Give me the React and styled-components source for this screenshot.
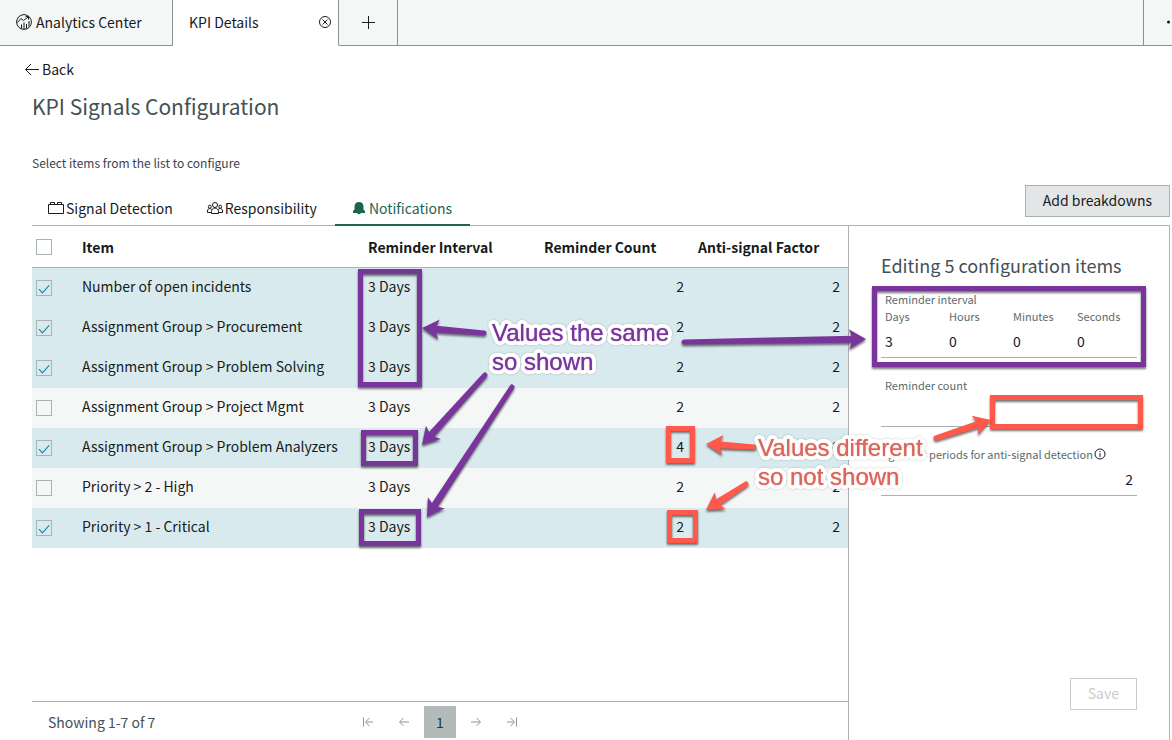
import { useState } from 'react';
import styled, { createGlobalStyle } from 'styled-components';

const GlobalStyle = createGlobalStyle`
  *, *::before, *::after {
    box-sizing: border-box;
  }
  body {
    margin: 0;
    background: #fff;
    color: #161b1c;
    font-family: 'Noto Sans CJK SC', 'Noto Sans', sans-serif;
    font-size: 14px;
    line-height: 24px;
  }
  button, input {
    font: inherit;
    color: inherit;
    margin: 0;
    padding: 0;
  }
  svg {
    display: block;
    flex: none;
  }
`;

const line = '#a9b3b3';
const purple = '#7a359c';
const red = '#ff594b';

const Page = styled.div`
  position: relative;
  display: flex;
  flex-direction: column;
  height: 100vh;
  overflow: hidden;
`;

/* workspace tabs */

const TabBar = styled.nav`
  display: flex;
  flex: none;
  height: 46px;
  background: #f5f7f7;
`;

const WorkTab = styled.button`
  display: flex;
  align-items: center;
  gap: 4px;
  width: ${(p) => p.$width}px;
  padding: 0 ${(p) => (p.$active ? 5 : 16)}px 2px 16px;
  border: 0;
  border-right: 1px solid #879494;
  border-bottom: 1px solid ${(p) => (p.$active ? '#fff' : '#879494')};
  background: ${(p) => (p.$active ? '#fff' : 'transparent')};
  white-space: nowrap;
`;

const TabName = styled.span`
  flex: 1;
  text-align: left;
`;

const AddTab = styled(WorkTab)`
  justify-content: center;
  padding: 0 0 2px;
`;

const TabFiller = styled.div`
  flex: 1;
  border-right: 1px solid #879494;
  border-bottom: 1px solid #879494;
`;

const MoreTab = styled.button`
  width: 28px;
  padding: 0 0 2px 22px;
  overflow: hidden;
  border: 0;
  border-bottom: 1px solid #879494;
  background: transparent;
`;

/* page head */

const Main = styled.main`
  display: flex;
  flex: 1;
  flex-direction: column;
  min-height: 0;
  padding: 11px 2px 0 32px;
`;

const BackLink = styled.a`
  display: flex;
  align-items: center;
  align-self: flex-start;
  gap: 2px;
  margin-left: -8px;
  color: inherit;
  text-decoration: none;
`;

const Title = styled.h1`
  margin: 9px 0 0;
  color: #435154;
  font-size: 21px;
  font-weight: 400;
  line-height: 32px;
`;

const Hint = styled.p`
  margin: 31px 0 12px;
  color: #3b4250;
  font-size: 12px;
  line-height: 20px;
`;

const SectionBar = styled.div`
  display: flex;
  justify-content: space-between;
  align-items: flex-start;
  height: 40px;
`;

const Sections = styled.div`
  display: flex;
  padding-top: 8px;
`;

/* positioned so that the active underline covers the line below it */
const Section = styled.button`
  position: relative;
  display: flex;
  align-items: center;
  gap: 2px;
  height: 33px;
  padding: 0 18px 2px 16px;
  border: 0;
  border-bottom: 2px solid ${(p) => (p.$active ? '#1b6552' : 'transparent')};
  background: none;
  color: ${(p) => (p.$active ? '#1b6552' : 'inherit')};
`;

const Button = styled.button`
  height: 32px;
  padding: 0 17px 2px;
  border: 1px solid ${line};
  background: #e4e5e7;

  &:disabled {
    border-color: #cbcbcb;
    background: #fff;
    color: #cbcbcb;
  }
`;

/* list */

const Body = styled.div`
  display: flex;
  flex: 1;
  min-height: 0;
  border-top: 1px solid ${line};
`;

const ListPane = styled.section`
  display: flex;
  flex: 1;
  flex-direction: column;
  min-width: 0;
`;

const Table = styled.table`
  width: 100%;
  border-spacing: 0;
  table-layout: fixed;
`;

const Col = styled.col`
  width: ${(p) => p.$width}px;
`;

const Th = styled.th`
  height: 42px;
  padding: 0 0 0 ${(p) => p.$left ?? 16}px;
  border-bottom: 1px solid ${line};
  font-weight: 700;
  text-align: left;
  white-space: nowrap;
`;

const Row = styled.tr`
  background: ${(p) => (p.$checked ? '#d9eaee' : '#f5f7f6')};
`;

const Td = styled.td`
  height: 40px;
  padding: 0 8px 4px 16px;
  text-align: ${(p) => (p.$numeric ? 'right' : 'left')};
  white-space: nowrap;
`;

const CheckCell = styled(Td)`
  padding: 0 0 0 4px;
`;

const Checkbox = styled.input`
  display: block;
  width: 16px;
  height: 16px;
  appearance: none;
  border: 1px solid ${line};
  background: transparent center / 14px 14px no-repeat;

  &:checked {
    background-image: url("data:image/svg+xml,%3Csvg xmlns='http://www.w3.org/2000/svg' viewBox='0 0 14 14'%3E%3Cpath d='M2 8.200l3.400 3.600L12.200 4.300' fill='none' stroke='%231f8ba0' stroke-width='1.2'/%3E%3C/svg%3E");
  }
`;

const Footer = styled.footer`
  display: grid;
  grid-template-columns: 320px 1fr;
  align-items: center;
  margin-top: auto;
  height: 39px;
  padding-top: 2px;
  border-top: 1px solid ${line};
  color: #435154;
`;

const Showing = styled.span`
  padding-left: 16px;
`;

const Pager = styled.div`
  display: flex;
  gap: 4px;
`;

const PageButton = styled.button`
  display: flex;
  align-items: center;
  justify-content: center;
  width: 32px;
  height: 32px;
  border: 0;
  background: ${(p) => (p.$current ? '#b2bbb9' : 'none')};
  color: ${(p) => (p.$current ? '#143d35' : '#8d9494')};
`;

/* edit panel */

const Panel = styled.form`
  display: flex;
  flex: none;
  flex-direction: column;
  width: 322px;
  padding: 23px 32px 30px;
  border: solid ${line};
  border-width: 0 1px;
`;

const PanelTitle = styled.h2`
  margin: 0;
  color: #435154;
  font-size: 18px;
  font-weight: 400;
  line-height: 32px;
  white-space: nowrap;
`;

const Fields = styled.fieldset`
  display: grid;
  grid-template-columns: repeat(4, 1fr);
  min-width: 0;
  margin: 0;
  padding: 0;
  border: 0;
  border-bottom: 1px solid ${line};
`;

const Label = styled.label`
  display: flex;
  align-items: center;
  padding-left: 4px;
  color: #5b6b6d;
  font-size: 11px;
  line-height: 18px;
  white-space: nowrap;
`;

const Legend = styled(Label).attrs({ as: 'legend' })`
  padding: 10px 0 0 4px;
  line-height: 16px;
`;

const UnitInput = styled.input`
  width: 100%;
  height: 32px;
  padding: 0 4px;
  border: 0;
  background: none;
`;

const Field = styled.div`
  padding-top: 18px;
  border-bottom: 1px solid ${line};
`;

const CountInput = styled(UnitInput)`
  text-align: right;
`;

const InfoIcon = styled.svg`
  color: #161b1c;
`;

const Actions = styled.div`
  display: flex;
  justify-content: flex-end;
  margin-top: auto;
`;

/* callouts drawn over the page */

const Callouts = styled.div`
  position: absolute;
  inset: 0;
  overflow: hidden;
  pointer-events: none;
`;

const Ink = styled.svg`
  position: absolute;
  inset: 0;
  width: 100%;
  height: 100%;

  > g {
    filter: drop-shadow(0 2px 1px rgba(0, 0, 0, 0.55));
  }
`;

// solid white ring round the letters
const halo = [2, 4]
  .flatMap((radius) =>
    Array.from({ length: 24 }, (_, i) => {
      const angle = (i / 24) * 2 * Math.PI;
      return `${(Math.cos(angle) * radius).toFixed(2)}px ${(Math.sin(angle) * radius).toFixed(2)}px #fff`;
    }),
  )
  .join(', ');

const Note = styled.p`
  position: absolute;
  top: ${(p) => p.$y}px;
  left: ${(p) => p.$x}px;
  margin: 0;
  color: ${(p) => p.$color};
  font-family: 'Liberation Sans', Arial, sans-serif;
  font-size: 24px;
  line-height: 29px;
  white-space: pre;
  text-shadow: 0 0 1px ${(p) => p.$color}, ${halo};
  filter: drop-shadow(0 0 1px rgba(0, 0, 0, 0.2));
`;

const Icon = ({ size = 16, width = 1, as: Svg = 'svg', children }) => (
  <Svg width={size} height={size} viewBox={`0 0 ${size} ${size}`} fill="none" stroke="currentColor" strokeWidth={width} aria-hidden="true">
    {children}
  </Svg>
);

const AnalyticsIcon = () => (
  <Icon>
    <circle cx="8" cy="8" r="7.4" />
    <path d="M1.300 8.500L5 4.500l2.500 2L12 3M9.500 2.600h3v3" />
    <path d="M5.500 14.500V10.500M8 15V8.500M10.500 14.500V10M13 12.500V7" />
  </Icon>
);

const BrickIcon = () => (
  <Icon>
    <path d="M.5 4.500h15v9H.5zM2.500 4.500v-2h4v2M9.500 4.500v-2h4v2" />
  </Icon>
);

const PeopleIcon = () => (
  <Icon>
    <circle cx="8" cy="5" r="2.500" />
    <path d="M4.500 13.500v-2C4.500 9.500 6 8 8 8s3.500 1.500 3.500 3.500v2z" />
    <circle cx="2.800" cy="6.700" r="1.500" />
    <circle cx="13.200" cy="6.700" r="1.500" />
    <path d="M4.500 12.500h-4v-1.500c0-1.500 1-2.500 2.300-2.500.8 0 1.400.3 1.900.9M11.500 12.500h4v-1.500c0-1.500-1-2.500-2.300-2.500-.8 0-1.400.3-1.900.9" />
  </Icon>
);

const BellIcon = () => (
  <Icon>
    <path
      d="M8 2C5.200 2 3.500 4 3.500 6.500v3L2 11v2h4.200c.3.800.9 1.200 1.800 1.200s1.500-.4 1.800-1.200H14v-2l-1.500-1.500v-3C12.500 4 10.800 2 8 2z"
      fill="currentColor"
      stroke="none"
    />
  </Icon>
);

const pagerIcons = {
  first: 'M3.500 3.500v9M13 8H6M9.500 4L5.500 8l4 4',
  prev: 'M13 8H4M7.500 4L3.500 8l4 4',
  next: 'M3 8h9M8.500 4l4 4-4 4',
  last: 'M12.500 3.500v9M3 8h7M6.500 4l4 4-4 4',
};

const PagerStep = ({ kind, label }) => (
  <PageButton type="button" aria-label={label}>
    <Icon>
      <path d={pagerIcons[kind]} />
    </Icon>
  </PageButton>
);

const Arrow = ({ from, to, color }) => {
  const [x1, y1] = from;
  const [x2, y2] = to;
  const length = Math.hypot(x2 - x1, y2 - y1);
  const angle = (Math.atan2(y2 - y1, x2 - x1) * 180) / Math.PI;
  return (
    <g>
      <g transform={`translate(${x1} ${y1}) rotate(${angle})`} fill={color}>
        <path d={`M0 -2.500L${length - 12} -3.500V3.500L0 2.500A2.500 2.500 0 0 1 0 -2.500z`} />
        <path d={`M${length} 0L${length - 17} -10L${length - 13} 0L${length - 17} 10z`} />
      </g>
    </g>
  );
};

const boxes = [
  { x: 358, y: 269, w: 64, h: 118, color: purple },
  { x: 361, y: 430, w: 57, h: 36, color: purple },
  { x: 359, y: 509, w: 62, h: 37, color: purple },
  { x: 872, y: 286, w: 274, h: 81, color: purple },
  { x: 666, y: 426, w: 29, h: 37, color: red },
  { x: 667, y: 510, w: 31, h: 33, color: red },
  { x: 990, y: 395, w: 153, h: 34, color: red },
];

const arrows = [
  { from: [484, 333], to: [422, 328], color: purple },
  { from: [485, 375], to: [422, 445], color: purple },
  { from: [512, 387], to: [427, 517], color: purple },
  { from: [684, 342], to: [866, 339], color: purple },
  { from: [754, 447], to: [706, 444], color: red },
  { from: [746, 484], to: [706, 510], color: red },
  { from: [936, 438], to: [991, 420], color: red },
];

const notes = [
  { x: 492, y: 318, color: purple, text: 'Values the same\nso shown' },
  { x: 758, y: 433, color: '#dd665c', text: 'Values different\nso not shown' },
];

const initialItems = [
  { name: 'Number of open incidents', count: 2, checked: true },
  { name: 'Assignment Group > Procurement', count: 2, checked: true },
  { name: 'Assignment Group > Problem Solving', count: 2, checked: true },
  { name: 'Assignment Group > Project Mgmt', count: 2, checked: false },
  { name: 'Assignment Group > Problem Analyzers', count: 4, checked: true },
  { name: 'Priority > 2 - High', count: 2, checked: false },
  { name: 'Priority > 1 - Critical', count: 2, checked: true },
];

const units = [
  { id: 'days', label: 'Days', value: '3' },
  { id: 'hours', label: 'Hours', value: '0' },
  { id: 'minutes', label: 'Minutes', value: '0' },
  { id: 'seconds', label: 'Seconds', value: '0' },
];

const App = () => {
  const [items, setItems] = useState(initialItems);
  const selected = items.filter((item) => item.checked).length;

  const toggle = (index) => {
    setItems(items.map((item, i) => (i === index ? { ...item, checked: !item.checked } : item)));
  };

  return (
    <Page>
      <GlobalStyle />
      <TabBar>
        <WorkTab $width={173}>
          <AnalyticsIcon />
          <TabName>Analytics Center</TabName>
        </WorkTab>
        <WorkTab $width={166} $active>
          <TabName>KPI Details</TabName>
          <Icon>
            <circle cx="8" cy="8" r="5.500" />
            <path d="M5.500 5.500l5 5M10.500 5.500l-5 5" />
          </Icon>
        </WorkTab>
        <AddTab $width={59} aria-label="New tab">
          <Icon>
            <path d="M8.500 2v13M2 8.500h13" />
          </Icon>
        </AddTab>
        <TabFiller />
        <MoreTab aria-label="More">
          <Icon>
            <path d="M2.500 8h.01M8 8h.01M13.500 8h.01" strokeWidth="3" strokeLinecap="round" />
          </Icon>
        </MoreTab>
      </TabBar>

      <Main>
        <BackLink href="#back">
          <Icon>
            <path d="M15 8.500H2M7 3L1.500 8.500 7 14" />
          </Icon>
          Back
        </BackLink>
        <Title>KPI Signals Configuration</Title>
        <Hint>Select items from the list to configure</Hint>

        <SectionBar>
          <Sections>
            <Section>
              <BrickIcon />
              Signal Detection
            </Section>
            <Section>
              <PeopleIcon />
              Responsibility
            </Section>
            <Section $active>
              <BellIcon />
              Notifications
            </Section>
          </Sections>
          <Button type="button">Add breakdowns</Button>
        </SectionBar>

        <Body>
          <ListPane>
            <Table>
              <colgroup>
                <Col $width={34} />
                <col />
                <Col $width={176} />
                <Col $width={164} />
                <Col $width={156} />
              </colgroup>
              <thead>
                <tr>
                  <Th $left={4}>
                    <Checkbox type="checkbox" aria-label="Select all" />
                  </Th>
                  <Th>Item</Th>
                  <Th>Reminder Interval</Th>
                  <Th>Reminder Count</Th>
                  <Th $left={6}>Anti-signal Factor</Th>
                </tr>
              </thead>
              <tbody>
                {items.map((item, index) => (
                  <Row key={item.name} $checked={item.checked}>
                    <CheckCell>
                      <Checkbox type="checkbox" aria-label={item.name} checked={item.checked} onChange={() => toggle(index)} />
                    </CheckCell>
                    <Td>{item.name}</Td>
                    <Td>3 Days</Td>
                    <Td $numeric>{item.count}</Td>
                    <Td $numeric>2</Td>
                  </Row>
                ))}
              </tbody>
            </Table>
            <Footer>
              <Showing>Showing 1-7 of 7</Showing>
              <Pager>
                <PagerStep kind="first" label="First page" />
                <PagerStep kind="prev" label="Previous page" />
                <PageButton type="button" $current>
                  1
                </PageButton>
                <PagerStep kind="next" label="Next page" />
                <PagerStep kind="last" label="Last page" />
              </Pager>
            </Footer>
          </ListPane>

          <Panel>
            <PanelTitle>Editing {selected} configuration items</PanelTitle>
            <Fields>
              <Legend>Reminder interval</Legend>
              {units.map((unit) => (
                <div key={unit.id}>
                  <Label htmlFor={unit.id}>{unit.label}</Label>
                  <UnitInput id={unit.id} defaultValue={unit.value} />
                </div>
              ))}
            </Fields>
            <Field>
              <Label htmlFor="count">Reminder count</Label>
              <CountInput id="count" />
            </Field>
            <Field>
              <Label htmlFor="periods">
                Ignore # periods for anti-signal detection
                <Icon size={14} as={InfoIcon}>
                  <circle cx="7" cy="7" r="5" />
                  <path d="M7 6.200v3.800M7 4v1.200" />
                </Icon>
              </Label>
              <CountInput id="periods" defaultValue="2" />
            </Field>
            <Actions>
              <Button type="submit" disabled>
                Save
              </Button>
            </Actions>
          </Panel>
        </Body>
      </Main>

      <Callouts>
        <Ink>
          {boxes.map((box) => (
            <g key={`${box.x}-${box.y}`}>
              <rect
                x={box.x + 2.5}
                y={box.y + 2.5}
                width={box.w - 5}
                height={box.h - 5}
                fill="none"
                stroke={box.color}
                strokeWidth="5"
              />
            </g>
          ))}
          {arrows.map((arrow) => (
            <Arrow key={arrow.from.join()} {...arrow} />
          ))}
        </Ink>
        {notes.map((note) => (
          <Note key={note.text} $x={note.x} $y={note.y} $color={note.color}>
            {note.text}
          </Note>
        ))}
      </Callouts>
    </Page>
  );
};

export default App;
